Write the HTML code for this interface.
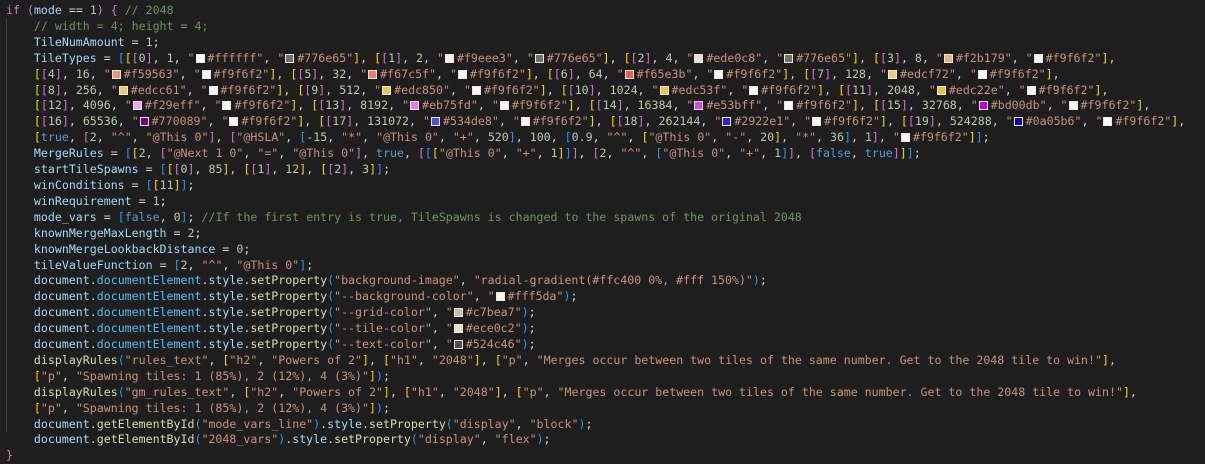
<!DOCTYPE html>
<html><head><meta charset="utf-8"><style>
html,body{margin:0;padding:0;background:#1e1e1e;width:1205px;height:464px;overflow:hidden}
pre{margin:0;padding:3px 0 0 6px;font-family:"DejaVu Sans Mono","Liberation Mono",monospace;font-size:11.6px;line-height:15.9px;color:#d4d4d4;white-space:pre;position:relative}
.g{position:absolute;left:6px;top:19px;width:1px;height:413px;background:#404040}
k{color:#c586c0}v{color:#9cdcfe}n{color:#b5cea8}t{color:#ce9178}c{color:#6a9955}o{color:#569cd6}f{color:#dcdcaa}e{color:#4fc1ff}
y{color:#ffd700}m{color:#da70d6}l{color:#179fff}
w{display:inline-block;box-sizing:border-box;width:9px;height:9px;border:1px solid #e8e8e8;margin:0 3px 0 1px;vertical-align:-1px}
</style></head><body><pre><div class="g"></div><k>if</k> <m>(</m><v>mode</v> == <n>1</n><m>)</m> <m>{</m> <c>// 2048</c>
    <c>// width = 4; height = 4;</c>
    <v>TileNumAmount</v> = <n>1</n>;
    <v>TileTypes</v> = <l>[</l><y>[</y><m>[</m><n>0</n><m>]</m>, <n>1</n>, <t>"<w style="background:#ffffff"></w>#ffffff"</t>, <t>"<w style="background:#776e65"></w>#776e65"</t><y>]</y>, <y>[</y><m>[</m><n>1</n><m>]</m>, <n>2</n>, <t>"<w style="background:#f9eee3"></w>#f9eee3"</t>, <t>"<w style="background:#776e65"></w>#776e65"</t><y>]</y>, <y>[</y><m>[</m><n>2</n><m>]</m>, <n>4</n>, <t>"<w style="background:#ede0c8"></w>#ede0c8"</t>, <t>"<w style="background:#776e65"></w>#776e65"</t><y>]</y>, <y>[</y><m>[</m><n>3</n><m>]</m>, <n>8</n>, <t>"<w style="background:#f2b179"></w>#f2b179"</t>, <t>"<w style="background:#f9f6f2"></w>#f9f6f2"</t><y>]</y>,
    <y>[</y><m>[</m><n>4</n><m>]</m>, <n>16</n>, <t>"<w style="background:#f59563"></w>#f59563"</t>, <t>"<w style="background:#f9f6f2"></w>#f9f6f2"</t><y>]</y>, <y>[</y><m>[</m><n>5</n><m>]</m>, <n>32</n>, <t>"<w style="background:#f67c5f"></w>#f67c5f"</t>, <t>"<w style="background:#f9f6f2"></w>#f9f6f2"</t><y>]</y>, <y>[</y><m>[</m><n>6</n><m>]</m>, <n>64</n>, <t>"<w style="background:#f65e3b"></w>#f65e3b"</t>, <t>"<w style="background:#f9f6f2"></w>#f9f6f2"</t><y>]</y>, <y>[</y><m>[</m><n>7</n><m>]</m>, <n>128</n>, <t>"<w style="background:#edcf72"></w>#edcf72"</t>, <t>"<w style="background:#f9f6f2"></w>#f9f6f2"</t><y>]</y>,
    <y>[</y><m>[</m><n>8</n><m>]</m>, <n>256</n>, <t>"<w style="background:#edcc61"></w>#edcc61"</t>, <t>"<w style="background:#f9f6f2"></w>#f9f6f2"</t><y>]</y>, <y>[</y><m>[</m><n>9</n><m>]</m>, <n>512</n>, <t>"<w style="background:#edc850"></w>#edc850"</t>, <t>"<w style="background:#f9f6f2"></w>#f9f6f2"</t><y>]</y>, <y>[</y><m>[</m><n>10</n><m>]</m>, <n>1024</n>, <t>"<w style="background:#edc53f"></w>#edc53f"</t>, <t>"<w style="background:#f9f6f2"></w>#f9f6f2"</t><y>]</y>, <y>[</y><m>[</m><n>11</n><m>]</m>, <n>2048</n>, <t>"<w style="background:#edc22e"></w>#edc22e"</t>, <t>"<w style="background:#f9f6f2"></w>#f9f6f2"</t><y>]</y>,
    <y>[</y><m>[</m><n>12</n><m>]</m>, <n>4096</n>, <t>"<w style="background:#f29eff"></w>#f29eff"</t>, <t>"<w style="background:#f9f6f2"></w>#f9f6f2"</t><y>]</y>, <y>[</y><m>[</m><n>13</n><m>]</m>, <n>8192</n>, <t>"<w style="background:#eb75fd"></w>#eb75fd"</t>, <t>"<w style="background:#f9f6f2"></w>#f9f6f2"</t><y>]</y>, <y>[</y><m>[</m><n>14</n><m>]</m>, <n>16384</n>, <t>"<w style="background:#e53bff"></w>#e53bff"</t>, <t>"<w style="background:#f9f6f2"></w>#f9f6f2"</t><y>]</y>, <y>[</y><m>[</m><n>15</n><m>]</m>, <n>32768</n>, <t>"<w style="background:#bd00db"></w>#bd00db"</t>, <t>"<w style="background:#f9f6f2"></w>#f9f6f2"</t><y>]</y>,
    <y>[</y><m>[</m><n>16</n><m>]</m>, <n>65536</n>, <t>"<w style="background:#770089"></w>#770089"</t>, <t>"<w style="background:#f9f6f2"></w>#f9f6f2"</t><y>]</y>, <y>[</y><m>[</m><n>17</n><m>]</m>, <n>131072</n>, <t>"<w style="background:#534de8"></w>#534de8"</t>, <t>"<w style="background:#f9f6f2"></w>#f9f6f2"</t><y>]</y>, <y>[</y><m>[</m><n>18</n><m>]</m>, <n>262144</n>, <t>"<w style="background:#2922e1"></w>#2922e1"</t>, <t>"<w style="background:#f9f6f2"></w>#f9f6f2"</t><y>]</y>, <y>[</y><m>[</m><n>19</n><m>]</m>, <n>524288</n>, <t>"<w style="background:#0a05b6"></w>#0a05b6"</t>, <t>"<w style="background:#f9f6f2"></w>#f9f6f2"</t><y>]</y>,
    <y>[</y><o>true</o>, <m>[</m><n>2</n>, <t>"^"</t>, <t>"@This 0"</t><m>]</m>, <m>[</m><t>"@HSLA"</t>, <l>[</l><n>-15</n>, <t>"*"</t>, <t>"@This 0"</t>, <t>"+"</t>, <n>520</n><l>]</l>, <n>100</n>, <l>[</l><n>0.9</n>, <t>"^"</t>, <y>[</y><t>"@This 0"</t>, <t>"-"</t>, <n>20</n><y>]</y>, <t>"*"</t>, <n>36</n><l>]</l>, <n>1</n><m>]</m>, <t>"<w style="background:#f9f6f2"></w>#f9f6f2"</t><y>]</y><l>]</l>;
    <v>MergeRules</v> = <l>[</l><y>[</y><n>2</n>, <m>[</m><t>"@Next 1 0"</t>, <t>"="</t>, <t>"@This 0"</t><m>]</m>, <o>true</o>, <m>[</m><l>[</l><y>[</y><t>"@This 0"</t>, <t>"+"</t>, <n>1</n><y>]</y><l>]</l><m>]</m>, <m>[</m><n>2</n>, <t>"^"</t>, <l>[</l><t>"@This 0"</t>, <t>"+"</t>, <n>1</n><l>]</l><m>]</m>, <m>[</m><o>false</o>, <o>true</o><m>]</m><y>]</y><l>]</l>;
    <v>startTileSpawns</v> = <l>[</l><y>[</y><m>[</m><n>0</n><m>]</m>, <n>85</n><y>]</y>, <y>[</y><m>[</m><n>1</n><m>]</m>, <n>12</n><y>]</y>, <y>[</y><m>[</m><n>2</n><m>]</m>, <n>3</n><y>]</y><l>]</l>;
    <v>winConditions</v> = <l>[</l><y>[</y><n>11</n><y>]</y><l>]</l>;
    <v>winRequirement</v> = <n>1</n>;
    <v>mode_vars</v> = <l>[</l><o>false</o>, <n>0</n><l>]</l>; <c>//If the first entry is true, TileSpawns is changed to the spawns of the original 2048</c>
    <v>knownMergeMaxLength</v> = <n>2</n>;
    <v>knownMergeLookbackDistance</v> = <n>0</n>;
    <v>tileValueFunction</v> = <l>[</l><n>2</n>, <t>"^"</t>, <t>"@This 0"</t><l>]</l>;
    <v>document</v>.<e>documentElement</e>.<v>style</v>.<f>setProperty</f><l>(</l><t>"background-image"</t>, <t>"radial-gradient(#ffc400 0%, #fff 150%)"</t><l>)</l>;
    <v>document</v>.<e>documentElement</e>.<v>style</v>.<f>setProperty</f><l>(</l><t>"--background-color"</t>, <t>"<w style="background:#fff5da"></w>#fff5da"</t><l>)</l>;
    <v>document</v>.<e>documentElement</e>.<v>style</v>.<f>setProperty</f><l>(</l><t>"--grid-color"</t>, <t>"<w style="background:#c7bea7"></w>#c7bea7"</t><l>)</l>;
    <v>document</v>.<e>documentElement</e>.<v>style</v>.<f>setProperty</f><l>(</l><t>"--tile-color"</t>, <t>"<w style="background:#ece0c2"></w>#ece0c2"</t><l>)</l>;
    <v>document</v>.<e>documentElement</e>.<v>style</v>.<f>setProperty</f><l>(</l><t>"--text-color"</t>, <t>"<w style="background:#524c46"></w>#524c46"</t><l>)</l>;
    <f>displayRules</f><l>(</l><t>"rules_text"</t>, <y>[</y><t>"h2"</t>, <t>"Powers of 2"</t><y>]</y>, <y>[</y><t>"h1"</t>, <t>"2048"</t><y>]</y>, <y>[</y><t>"p"</t>, <t>"Merges occur between two tiles of the same number. Get to the 2048 tile to win!"</t><y>]</y>,
    <y>[</y><t>"p"</t>, <t>"Spawning tiles: 1 (85%), 2 (12%), 4 (3%)"</t><y>]</y><l>)</l>;
    <f>displayRules</f><l>(</l><t>"gm_rules_text"</t>, <y>[</y><t>"h2"</t>, <t>"Powers of 2"</t><y>]</y>, <y>[</y><t>"h1"</t>, <t>"2048"</t><y>]</y>, <y>[</y><t>"p"</t>, <t>"Merges occur between two tiles of the same number. Get to the 2048 tile to win!"</t><y>]</y>,
    <y>[</y><t>"p"</t>, <t>"Spawning tiles: 1 (85%), 2 (12%), 4 (3%)"</t><y>]</y><l>)</l>;
    <v>document</v>.<f>getElementById</f><l>(</l><t>"mode_vars_line"</t><l>)</l>.<v>style</v>.<f>setProperty</f><l>(</l><t>"display"</t>, <t>"block"</t><l>)</l>;
    <v>document</v>.<f>getElementById</f><l>(</l><t>"2048_vars"</t><l>)</l>.<v>style</v>.<f>setProperty</f><l>(</l><t>"display"</t>, <t>"flex"</t><l>)</l>;
<m>}</m></pre></body></html>
